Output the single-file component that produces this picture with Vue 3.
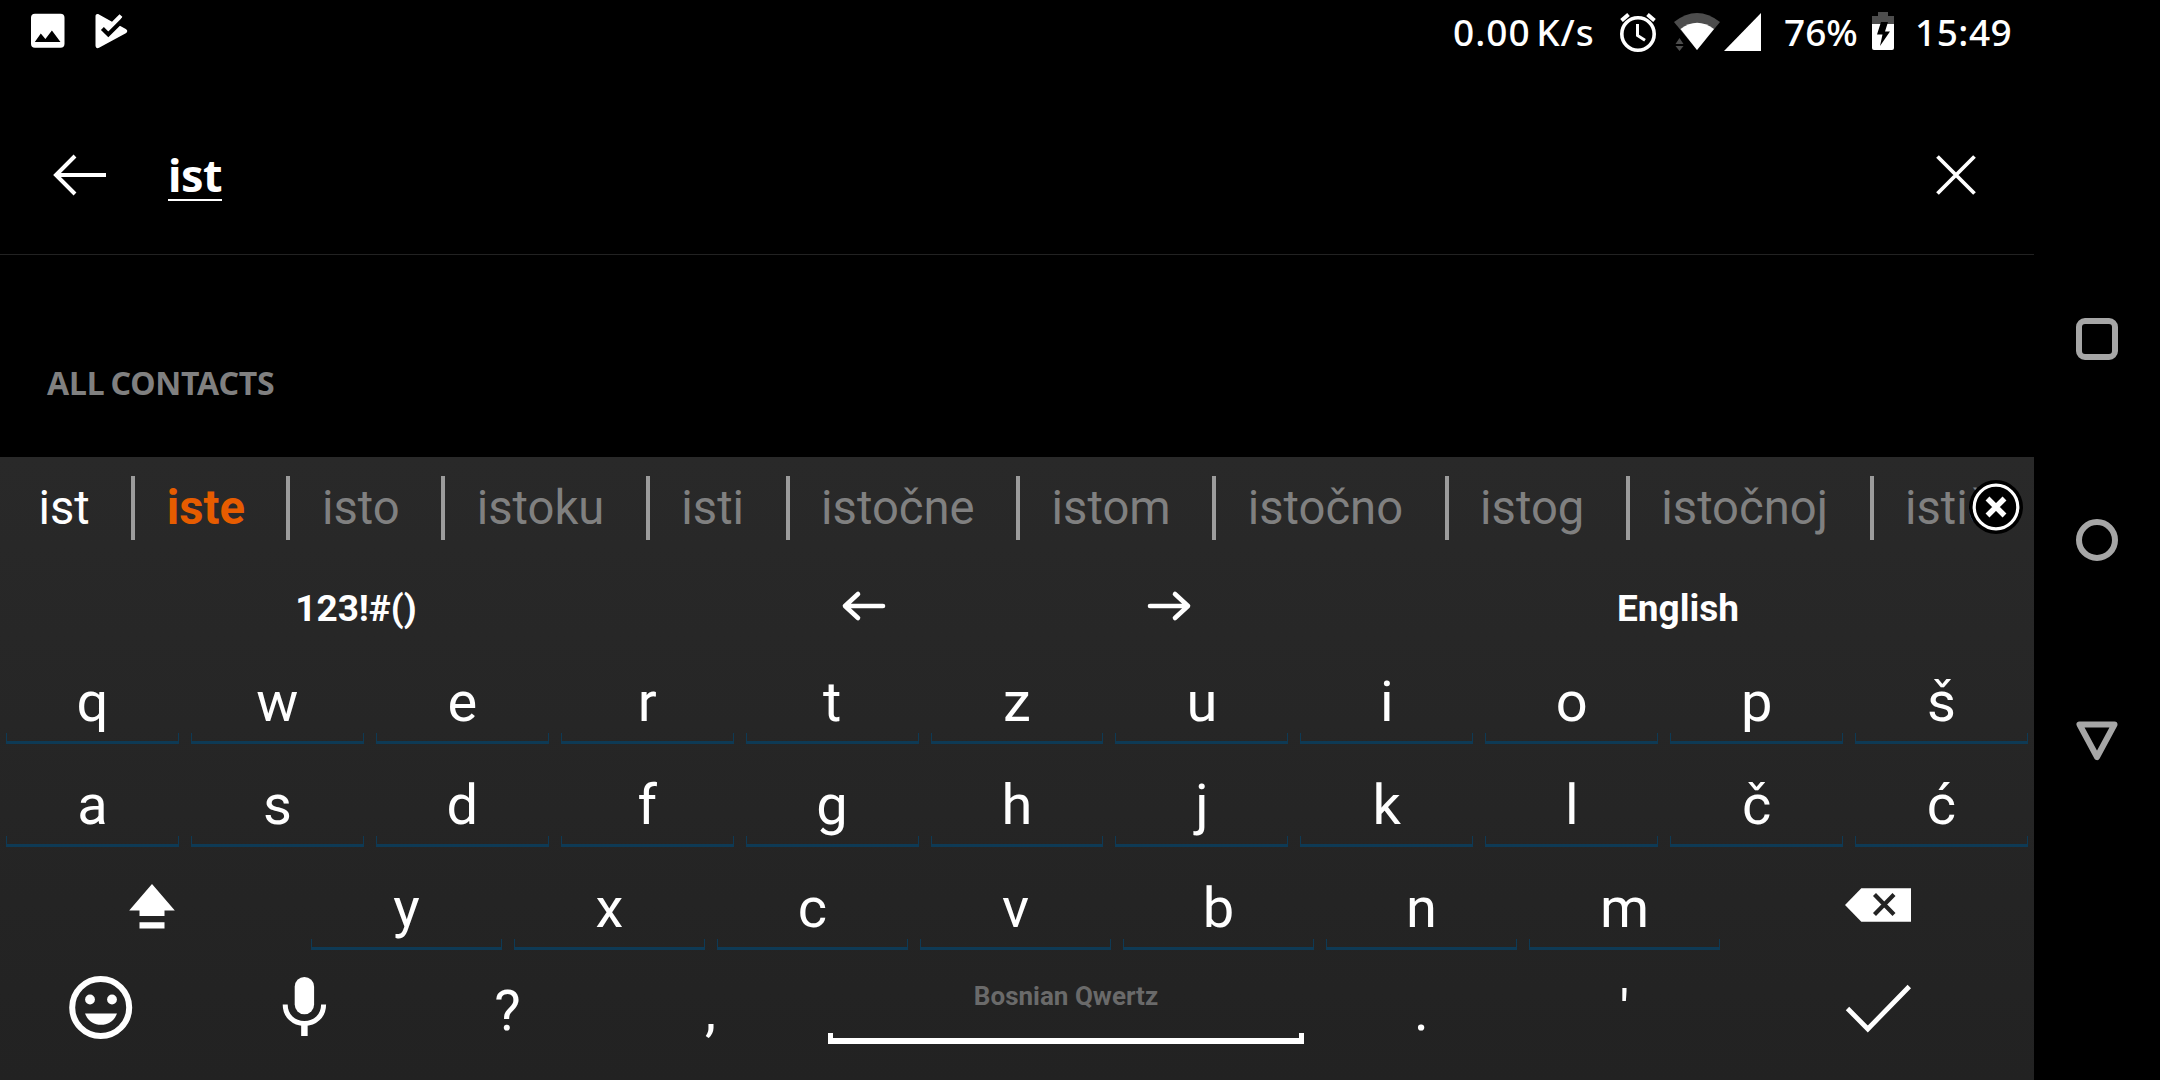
<script setup>
const suggestions = ['ist', 'iste', 'isto', 'istoku', 'isti', 'istočne', 'istom', 'istočno', 'istog', 'istočnoj', 'istič']
const letterRows = [
  ['q', 'w', 'e', 'r', 't', 'z', 'u', 'i', 'o', 'p', 'š'],
  ['a', 's', 'd', 'f', 'g', 'h', 'j', 'k', 'l', 'č', 'ć'],
]
const thirdRow = ['y', 'x', 'c', 'v', 'b', 'n', 'm']
</script>

<template>
  <div class="screen">
    <main class="app">
      <header class="status">
        <div class="notifications">
          <svg width="36" height="36" viewBox="0 0 36 36">
            <path fill="#fff" fill-rule="evenodd" d="M5 .8h25.500a4 4 0 0 1 4 4v26a4 4 0 0 1-4 4H5a4 4 0 0 1-4-4v-26a4 4 0 0 1 4-4zM4.800 29h25.700l-8.600-11.400-6.500 8.300-4.600-5.500z" />
          </svg>
          <svg width="34" height="36" viewBox="0 0 34 36">
            <path fill="#fff" d="M.5 3.500C.5 1.300 2.200.6 4 1.500L17 8.800 24.500 1.200 27.300 3.800 23.500 12 30.800 16C32.800 17.200 32.800 19 30.800 20.200L4 34.800C2.200 35.700.5 34.800.5 32.600z" />
            <path d="M7.400 15.600l5.900 5.800L28.500 6.200" fill="none" stroke="#000" stroke-width="4.200" />
          </svg>
        </div>
        <div class="indicators">
          <span class="speed">0.00 K/s</span>
          <svg class="alarm" width="38" height="40" viewBox="0 0 38 40">
            <g fill="none" stroke="#fff">
              <circle cx="19" cy="22" r="16.200" stroke-width="3.600" />
              <path d="M2.500 8.500l7-6M35.500 8.500l-7-6" stroke-width="4" />
              <path d="M18.500 12v11.500l7.500 4.800" stroke-width="3" />
            </g>
          </svg>
          <svg class="wifi" width="46" height="40" viewBox="0 0 46 40">
            <path d="M0 10Q23-8 46 10L23 38z" fill="#4d4d4d" />
            <path d="M6.500 17Q23 4.500 40 17L23 38z" fill="#fff" />
            <path d="M1.500 32l4-6 4 6zM1.500 34l4 5 4-5z" fill="#4d4d4d" />
          </svg>
          <svg class="signal" width="38" height="40" viewBox="0 0 38 40"><path d="M37 1v38H0z" fill="#fff" /></svg>
          <span class="percent">76%</span>
          <svg class="battery" width="22" height="40" viewBox="0 0 22 40">
            <path d="M6 0h10v4h6v10H0V4h6z" fill="#4d4d4d" />
            <path d="M0 12h22v24a2 2 0 0 1-2 2H2a2 2 0 0 1-2-2z" fill="#fff" />
            <path d="M9 10h7l-3 9.500h5L8 34l2.500-11.500H5z" fill="#000" />
          </svg>
          <span class="clock">15:49</span>
        </div>
      </header>

      <section class="search">
        <svg width="54" height="42" viewBox="0 0 54 42">
          <path d="M53 21H3M22 2L3 21l19 19" fill="none" stroke="#fff" stroke-width="4" />
        </svg>
        <span class="query">ist</span>
        <svg class="clear" width="42" height="42" viewBox="0 0 42 42">
          <path d="M2.500 2.500l37 37M39.500 2.500l-37 37" fill="none" stroke="#fff" stroke-width="3.800" />
        </svg>
      </section>

      <section class="contacts"><h2>ALL CONTACTS</h2></section>

      <section class="keyboard">
        <div class="suggestions">
          <span
            v-for="(word, i) in suggestions"
            :key="word"
            class="word"
            :class="{ typed: i === 0, best: i === 1 }"
          >{{ word }}</span>
          <svg class="dismiss" width="56" height="56" viewBox="0 0 56 56">
            <circle cx="28" cy="28" r="27" fill="#000" />
            <circle cx="28" cy="28" r="21.800" fill="none" stroke="#fff" stroke-width="3.200" />
            <path d="M19.500 19.500l17 17M36.500 19.500l-17 17" stroke="#fff" stroke-width="5.500" />
          </svg>
        </div>

        <div class="functions">
          <div class="fn wide">123!#()</div>
          <div class="fn">
            <svg width="48" height="34" viewBox="0 0 48 34">
              <path d="M43 17H5M18 5L5 17l13 12" fill="none" stroke="#fff" stroke-width="4.600" stroke-linecap="round" stroke-linejoin="round" />
            </svg>
          </div>
          <div class="fn">
            <svg width="48" height="34" viewBox="1 0 48 34">
              <path d="M5 17h38M30 5l13 12-13 12" fill="none" stroke="#fff" stroke-width="4.600" stroke-linecap="round" stroke-linejoin="round" />
            </svg>
          </div>
          <div class="fn wide">English</div>
        </div>

        <div v-for="(row, r) in letterRows" :key="r" class="row">
          <div v-for="letter in row" :key="letter" class="key lined">{{ letter }}</div>
        </div>

        <div class="row">
          <div class="key shift">
            <svg width="80" height="80" viewBox="112.500 868 80 80" fill="#fff">
              <path d="M151.500 884l22.800 26.500H164V916h-25v-5.500h-10.300zM139 922.300h25v6.200h-25z" />
            </svg>
          </div>
          <div v-for="letter in thirdRow" :key="letter" class="key lined">{{ letter }}</div>
          <div class="key edge">
            <svg width="80" height="80" viewBox="1840 868 80 80">
              <path d="M1845 905l16.300-16.700H1911v33.400h-49.700z" fill="#fff" />
              <path d="M1874.500 894.500l19.500 20M1894 894.500l-19.500 20" stroke="#242424" stroke-width="4.200" />
            </svg>
          </div>
        </div>

        <div class="row">
          <div class="key">
            <svg width="80" height="80" viewBox="61.500 971 80 80">
              <circle cx="100.200" cy="1007.500" r="28.500" fill="none" stroke="#fff" stroke-width="6" />
              <g fill="#fff">
                <circle cx="89.500" cy="999.500" r="4.900" />
                <circle cx="111.500" cy="999.500" r="4.900" />
                <path d="M84.500 1013.500h32c-2.500 7-8.500 11.300-16 11.300s-13.500-4.300-16-11.300z" />
              </g>
            </svg>
          </div>
          <div class="key">
            <svg width="80" height="80" viewBox="264.500 971 80 80">
              <rect x="294.200" y="977" width="19.400" height="37.300" rx="9.700" fill="#fff" />
              <path d="M284.700 1004.500c0 11.500 8.500 19 19.200 19s19.200-7.500 19.200-19" fill="none" stroke="#fff" stroke-width="5" />
              <path d="M303.900 1023v13" stroke="#fff" stroke-width="6.500" />
            </svg>
          </div>
          <div class="key">?</div>
          <div class="key">,</div>
          <div class="key space">
            <span>Bosnian Qwertz</span>
            <i></i>
          </div>
          <div class="key">.</div>
          <div class="key">'</div>
          <div class="key edge">
            <svg width="80" height="80" viewBox="1840 971 80 80">
              <path d="M1847.500 1008.500l20.300 20.500 41.500-42.500" fill="none" stroke="#fff" stroke-width="4.800" />
            </svg>
          </div>
        </div>
      </section>
    </main>

    <nav class="navbar">
      <svg width="44" height="44" viewBox="0 0 44 44"><rect x="4" y="4" width="36" height="36" rx="6" /></svg>
      <svg width="44" height="44" viewBox="0 0 44 44"><circle cx="22" cy="22" r="18" /></svg>
      <svg width="44" height="44" viewBox="0 0 44 44"><path d="M4.500 5.500h35L22 38z" stroke-linejoin="round" /></svg>
    </nav>
  </div>
</template>

<style>
body {
  margin: 0;
  background: #000;
}
</style>

<style scoped>
.screen {
  display: flex;
  width: 2160px;
  height: 1080px;
  overflow: hidden;
  background: #000;
  color: #fff;
  font-family: Roboto, sans-serif;
}
svg {
  display: block;
  flex: none;
}
.app {
  display: flex;
  flex-direction: column;
  width: 2034px;
}
.status {
  box-sizing: border-box;
  display: flex;
  justify-content: space-between;
  height: 64px;
  padding: 0 22px 0 30px;
  font: 500 37px/63px "Noto Sans", sans-serif;
  white-space: nowrap;
}
.notifications {
  display: flex;
  gap: 29px;
  padding-top: 13px;
}
.indicators {
  display: flex;
}
.indicators svg {
  margin-top: 12px;
}
.speed {
  width: 143px;
  margin-right: 23px;
  letter-spacing: 1px;
  word-spacing: -5px;
}
.alarm { margin-right: 17px; }
.wifi { margin-right: 4px; }
.signal { margin-right: 22px; }
.percent { width: 74px; margin-right: 14px; }
.battery { margin-right: 21px; }
.clock { width: 97px; letter-spacing: 0.5px; }
.search {
  box-sizing: border-box;
  display: flex;
  align-items: center;
  height: 191px;
  padding: 31px 57px 0 53px;
  border-bottom: 1px solid #222;
}
.query {
  height: 50px;
  margin-left: 61px;
  font: 700 45px/52px "Noto Sans", sans-serif;
  letter-spacing: -0.5px;
  border-bottom: 2px solid #fff;
}
.clear {
  margin-left: auto;
}
.contacts {
  height: 202px;
}
.contacts h2 {
  margin: 106px 0 0 47px;
  color: #808080;
  font: 700 32px/44px "Noto Sans", sans-serif;
  letter-spacing: -0.2px;
  word-spacing: -2px;
}
.keyboard {
  display: flex;
  flex: 1;
  flex-direction: column;
  background: linear-gradient(#292929, #222);
}
.suggestions {
  position: relative;
  display: flex;
  align-items: center;
  height: 101px;
  overflow: hidden;
  color: #808080;
  font-size: 47.2px;
  white-space: nowrap;
}
.word {
  height: 64px;
  padding: 0 41.500px 0 31.500px;
  border-right: 4px solid #9c9c9c;
  line-height: 65px;
}
.word:last-of-type { border: 0; }
.typed { padding-left: 38.500px; color: #fff; }
.best { color: #e65c00; font-weight: 700; }
.dismiss {
  position: absolute;
  top: 22px;
  right: 10px;
}
.functions {
  box-sizing: border-box;
  display: flex;
  height: 86px;
  padding-top: 14px;
  font-size: 37px;
  font-weight: 700;
}
.fn {
  display: flex;
  flex: 1.5;
  align-items: center;
  justify-content: center;
}
.fn svg { margin-bottom: 5px; }
.wide { flex: 3.5; }
.row {
  display: flex;
  height: 103px;
}
.key {
  position: relative;
  box-sizing: border-box;
  display: flex;
  flex: 203;
  align-items: center;
  justify-content: center;
  height: 100px;
  padding-top: 16px;
  font-size: 56px;
}
.shift { flex: 305; }
.edge { flex: 308; }
.lined::after {
  content: "";
  position: absolute;
  right: 6px;
  bottom: 0;
  left: 6px;
  box-sizing: border-box;
  height: 11px;
  border: solid #0e3a55;
  border-width: 0 1px 3px;
}
.space {
  flex: 508;
  flex-direction: column;
  align-items: stretch;
  justify-content: flex-start;
  height: 91px;
  padding-top: 28px;
}
.space span {
  color: #6a6a6a;
  font-size: 26px;
  font-weight: 700;
  line-height: 30px;
  text-align: center;
}
.space i {
  height: 5px;
  margin: auto 16px 0;
  border: solid #fff;
  border-width: 0 5px 6px;
}
.navbar {
  display: flex;
  flex: 1;
  flex-direction: column;
  align-items: center;
  gap: 157px;
  padding-top: 317px;
}
.navbar svg {
  fill: none;
  stroke: #a6a6a6;
  stroke-width: 6;
}
</style>
